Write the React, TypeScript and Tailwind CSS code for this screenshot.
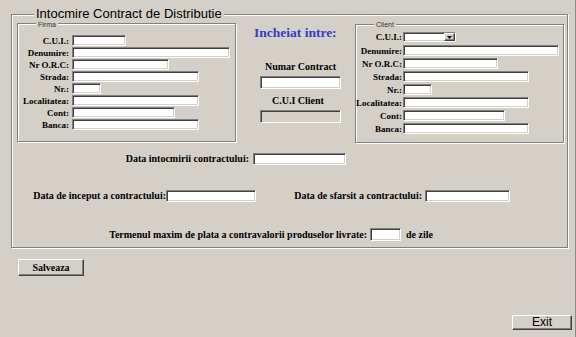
const serif = "font-['Liberation_Serif',serif]";
const sans = "font-['Liberation_Sans',Arial,sans-serif]";

const sunken =
  "border border-t-[#808080] border-l-[#808080] border-r-white border-b-white shadow-[inset_1px_1px_0_#404040,inset_-1px_-1px_0_#d4d0c8]";
const raised =
  "border border-t-white border-l-white border-r-[#404040] border-b-[#404040] shadow-[inset_-1px_-1px_0_#808080]";
const etched = "border border-[#808080] shadow-[inset_1px_1px_0_#fff,1px_1px_0_#fff]";

const firmaFields = [
  { label: "C.U.I.:", w: "w-[54px]" },
  { label: "Denumire:", w: "w-[158px]" },
  { label: "Nr O.R.C:", w: "w-[97px]" },
  { label: "Strada:", w: "w-[127px]" },
  { label: "Nr.:", w: "w-[29px]" },
  { label: "Localitatea:", w: "w-[127px]" },
  { label: "Cont:", w: "w-[103px]" },
  { label: "Banca:", w: "w-[127px]" },
];

const clientFields = [
  { label: "Denumire:", w: "w-[156px]" },
  { label: "Nr O.R.C:", w: "w-[95px]" },
  { label: "Strada:", w: "w-[126px]" },
  { label: "Nr.:", w: "w-[29px]" },
  { label: "Localitatea:", w: "w-[126px]" },
  { label: "Cont:", w: "w-[102px]" },
  { label: "Banca:", w: "w-[126px]" },
];

function Legend({ text, className }: { text: string; className: string }) {
  return (
    <span className={`absolute bg-[#d4d0c8] px-[2px] whitespace-nowrap ${sans} ${className}`}>
      {text}
    </span>
  );
}

function Input({ w, h = "h-[11px]", disabled }: { w: string; h?: string; disabled?: boolean }) {
  return <div className={`${w} ${h} ${sunken} ${disabled ? "bg-[#d4d0c8]" : "bg-white"}`} />;
}

export default function App() {
  return (
    <div className="w-[576px] h-[337px] bg-[#d4d0c8] border-r border-[#8c8c8c] flex flex-col overflow-hidden text-black">
      {/* Main group */}
      <div className={`relative ml-[11px] mt-[14px] w-[557px] h-[234px] flex flex-col ${etched}`}>
        <Legend text="Intocmire Contract de Distributie" className="-top-[6px] left-[22px] text-[13px] leading-[10px]" />

        <div className="flex items-start mt-[8px]">
          {/* Firma */}
          <div className={`relative ml-[5px] w-[219px] h-[119px] pt-[11px] flex flex-col ${etched}`}>
            <Legend text="Firma" className="-top-[2px] left-[18px] text-[7px] leading-[6px] text-[#333]" />
            {firmaFields.map((f) => (
              <div key={f.label} className="flex items-start h-[12px]">
                <span className={`w-[52px] pr-[1px] text-right text-[9px] leading-[12px] font-bold ${serif}`}>
                  {f.label}
                </span>
                <div className="ml-[2px]">
                  <Input w={f.w} />
                </div>
              </div>
            ))}
          </div>

          {/* Middle */}
          <div className={`ml-[18px] w-[88px] pt-[2px] flex flex-col items-start ${serif} font-bold`}>
            <span className="text-[13.5px] leading-[16px] text-[#3a3ac8] whitespace-nowrap">Incheiat intre:</span>
            <span className="mt-[20px] ml-[11px] text-[10px] leading-[12px] whitespace-nowrap">Numar Contract</span>
            <div className="mt-[3px] ml-[6px]">
              <Input w="w-[81px]" h="h-[13px]" />
            </div>
            <span className="mt-[6px] ml-[18px] text-[10px] leading-[12px] whitespace-nowrap">C.U.I Client</span>
            <div className="mt-[3px] ml-[6px]">
              <Input w="w-[81px]" h="h-[13px]" disabled />
            </div>
          </div>

          {/* Client */}
          <div className={`relative mt-[1px] ml-[13px] w-[209px] h-[119px] pt-[7px] flex flex-col ${etched}`}>
            <Legend text="Client" className="-top-[3px] left-[18px] text-[7px] leading-[6px] text-[#333]" />
            <div className="flex items-start h-[13px]">
              <span className={`w-[47px] pr-[1px] text-right text-[9px] leading-[11px] font-bold ${serif}`}>C.U.I.:</span>
              <div className={`w-[53px] h-[10px] bg-white flex justify-end items-start ${sunken}`}>
                <div className={`w-[11px] h-[8px] bg-[#d4d0c8] flex items-center justify-center ${raised}`}>
                  <svg width="5" height="3" viewBox="0 0 5 3">
                    <path d="M0 0h5L2.5 3z" fill="#000" />
                  </svg>
                </div>
              </div>
            </div>
            {clientFields.map((f) => (
              <div key={f.label} className="flex items-start h-[13px]">
                <span className={`w-[47px] pr-[1px] text-right text-[9px] leading-[12px] font-bold whitespace-nowrap ${serif}`}>
                  {f.label}
                </span>
                <Input w={f.w} />
              </div>
            ))}
          </div>
        </div>

        {/* Dates */}
        <div className={`flex flex-col text-[10px] leading-[12px] font-bold ${serif}`}>
          <div className="flex items-start mt-[10px] h-[12px]">
            <span className="w-[237px] text-right whitespace-nowrap">Data intocmirii contractului:</span>
            <div className="ml-[4px]">
              <Input w="w-[93px]" h="h-[12px]" />
            </div>
          </div>
          <div className="flex items-start mt-[25px] h-[12px]">
            <span className="w-[154px] text-right whitespace-nowrap">Data de inceput a contractului:</span>
            <Input w="w-[90px]" h="h-[12px]" />
            <span className="w-[166px] text-right whitespace-nowrap">Data de sfarsit a contractului:</span>
            <div className="ml-[3px]">
              <Input w="w-[85px]" h="h-[12px]" />
            </div>
          </div>
          <div className="flex items-start mt-[26px] h-[13px]">
            <span className="w-[355px] text-right whitespace-nowrap leading-[13px]">
              Termenul maxim de plata a contravalorii produselor livrate:
            </span>
            <div className="ml-[3px]">
              <Input w="w-[31px]" h="h-[13px]" />
            </div>
            <span className="ml-[5px] leading-[13px] whitespace-nowrap">de zile</span>
          </div>
        </div>
      </div>

      <button
        className={`ml-[18px] mt-[11px] w-[66px] h-[17px] bg-[#d4d0c8] flex items-center justify-center text-[10px] font-bold ${serif} ${raised}`}
      >
        Salveaza
      </button>

      <button
        className={`self-end mr-[3px] mt-[39px] w-[60px] h-[15px] bg-[#d4d0c8] flex items-center justify-center text-[12px] leading-[13px] ${sans} ${raised}`}
      >
        Exit
      </button>
    </div>
  );
}
